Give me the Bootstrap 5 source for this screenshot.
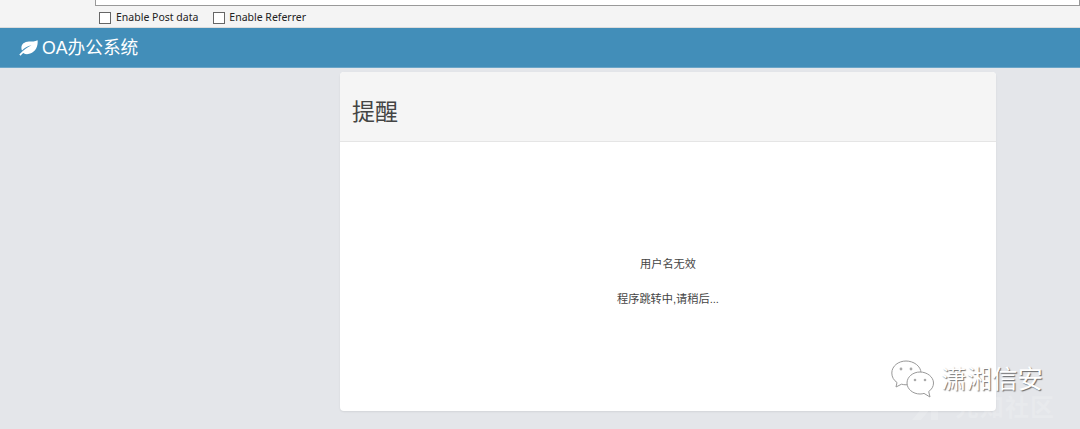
<!DOCTYPE html>
<html lang="zh">
<head>
<meta charset="utf-8">
<title>提醒</title>
<link href="https://cdn.jsdelivr.net/npm/bootstrap@5.3.0/dist/css/bootstrap.min.css" rel="stylesheet">
<style>
html,body{height:429px;overflow:hidden}
body{background:#e4e6ea;font-family:"Liberation Sans","Noto Sans CJK SC",sans-serif;color:#444;position:relative}
.hackbar{height:28px;background:#f4f4f4;border-bottom:1px solid #dcdcdc;padding-left:95px}
.hack-input{height:6px;background:#fff;border:1px solid #999;border-top:0}
.hack-opts{padding-left:4px;height:23px;font-family:"Noto Sans","DejaVu Sans",sans-serif;font-size:10.5px;color:#222;gap:15px}
.hack-box{width:12px;height:12px;background:#fff;border:1px solid #666;display:block;flex:none}
.hack-opt{gap:5px}
.hack-opt+.hack-opt{gap:4px}
.topbar{height:40px;background:#428eb9;border-bottom:1px solid #6aa5c8;padding-left:19px;color:#fff;font-size:17.7px;gap:4px}
.topbar span{position:relative;top:1px}
.leaf{width:19px;height:16px;flex:none}
.main-wrap{padding:4px 84px 0 340px}
.panel{height:339px;background:#fff;border-radius:4px;box-shadow:0 1px 2px rgba(0,0,0,.08);overflow:hidden}
.panel-head{height:70px;background:#f5f5f5;border-bottom:1px solid #e5e5e5;padding:0 12px}
.panel-head h1{font-size:23px;font-weight:400;margin:12px 0 0;color:#444}
.panel-body{height:269px;font-size:11.2px;color:#444;text-align:center;padding-top:115px}
.panel-body p{margin:0 0 20px;line-height:15px}
.wm{position:absolute;left:891px;top:360px;gap:7px;color:#fff;font-size:25.5px;line-height:38px;text-shadow:1px 1px 1px rgba(0,0,0,.55)}
.wm-icon{width:43px;height:38px;flex:none}
.wm-ghost{position:absolute;left:955px;top:394px;color:#fff;opacity:.16;font-size:24px;font-weight:700;line-height:28px;letter-spacing:1px}
.wm-mark{position:absolute;left:912px;top:396px;width:36px;height:24px;opacity:.16}
</style>
</head>
<body>
<div class="hackbar">
  <div class="hack-input"></div>
  <div class="hack-opts d-flex align-items-center">
    <div class="hack-opt d-flex align-items-center"><span class="hack-box"></span><span>Enable Post data</span></div>
    <div class="hack-opt d-flex align-items-center"><span class="hack-box"></span><span>Enable Referrer</span></div>
  </div>
</div>
<div class="topbar d-flex align-items-center">
  <svg class="leaf" viewBox="0 0 19 16"><path fill="#fff" d="M18.600 .3C16 1.700 13 1.500 10 1.600 5.300 1.800 2.400 4.300 2.400 7.800c0 1 .2 1.900.6 2.700C5.200 8 8.500 6.200 12.500 5.300 8.800 7 4.700 9.700.3 14.500l1.300 1.200c.8-1 1.700-1.900 2.600-2.800 1.400 1 3.100 1.400 5 1.200 6-.8 10.200-6.300 9.400-13.800z"/></svg>
  <span>OA办公系统</span>
</div>
<div class="main-wrap">
  <div class="panel">
    <div class="panel-head d-flex align-items-center"><h1>提醒</h1></div>
    <div class="panel-body">
      <p>用户名无效</p>
      <p>程序跳转中,请稍后...</p>
    </div>
  </div>
</div>
<svg class="wm-mark" viewBox="0 0 36 24"><path fill="#fff" d="M0 24 20 0h6v24h-7V12L9 24z"/></svg>
<div class="wm-ghost">先知社区</div>
<div class="wm d-flex align-items-center">
  <svg class="wm-icon" viewBox="0 0 43 38" fill="#fff" stroke="#999" stroke-width="1">
    <path d="M15 1C7.500 1 .8 6 .8 13c0 4 2 7.300 5.200 9.500L5 27l5.500-2.800c1.500.4 3 .6 4.500.6 7.500 0 15-5 15-11.800C30 6 22.500 1 15 1z"/>
    <path d="M29 12c-7 0-13 4.800-13 11s6 11 13 11c1.500 0 2.800-.2 4-.6L39 37l-1.300-5.500c3-2 4.800-5 4.800-8.500C42.500 16.800 36 12 29 12z"/>
    <g fill="#aaa" stroke="none"><circle cx="10" cy="9" r="1.400"/><circle cx="20" cy="9" r="1.400"/><circle cx="24" cy="20" r="1.300"/><circle cx="34" cy="20" r="1.300"/></g>
  </svg>
  <span>潇湘信安</span>
</div>
</body>
</html>
